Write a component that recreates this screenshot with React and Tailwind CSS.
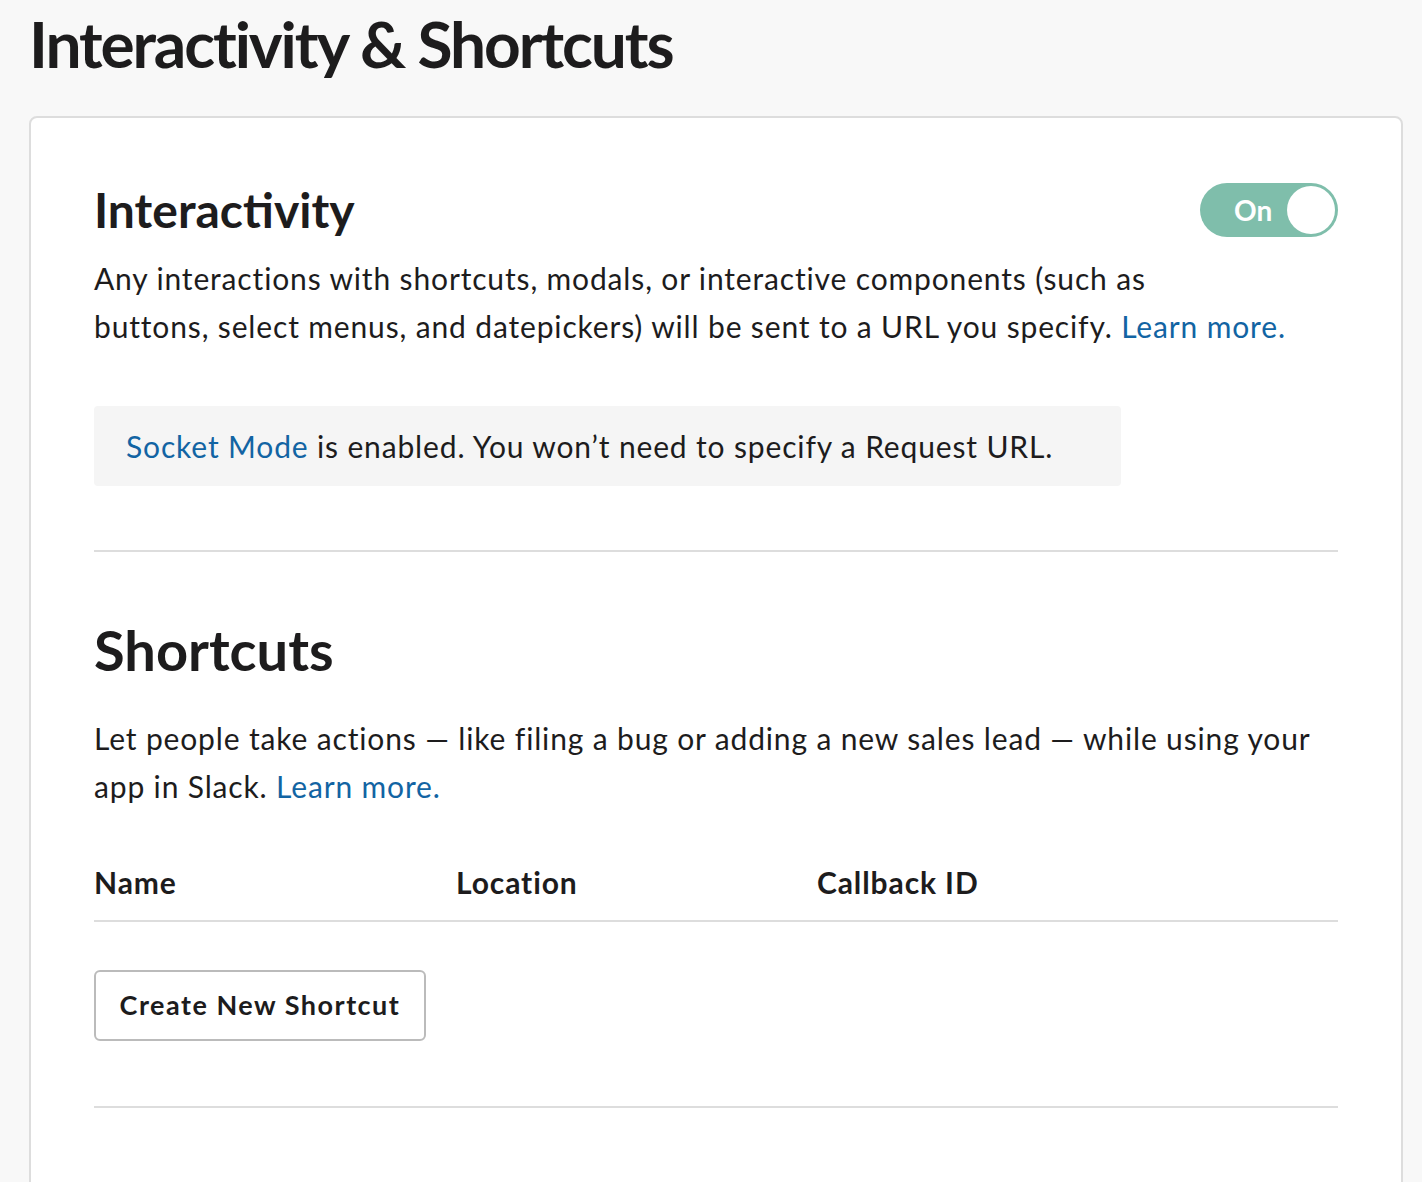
import React from 'react';

const Toggle = () => (
  <div className="relative flex h-[54px] w-[138px] items-center rounded-full bg-[#7fbeab]">
    <span className="ml-[34px] text-[28px] font-bold leading-none text-white">On</span>
    <span className="absolute right-[3px] top-[3px] h-[48px] w-[48px] rounded-full bg-white"></span>
  </div>
);

export default function App() {
  return (
    <div className="min-h-screen bg-[#f8f8f8] px-[29px] pt-[6px] text-[#1d1c1d]" style={{ fontFamily: 'Lato, "Noto Sans", sans-serif' }}>
      {/* Page title */}
      <h1 className="text-[64px] font-bold leading-[1.2] tracking-[-2.1px]">Interactivity &amp; Shortcuts</h1>

      <div className="mt-[33px] w-[1374px] rounded-lg border-2 border-[#dddddd] bg-white px-[63px] pb-[120px] pt-[63px]">
        {/* Interactivity */}
        <div className="flex items-center justify-between">
          <h2 className="text-[48px] font-bold leading-[1.2]">Interactivity</h2>
          <Toggle />
        </div>
        <p className="mt-[16px] whitespace-nowrap text-[30px] leading-[48px] tracking-[0.85px]">
          Any interactions with shortcuts, modals, or interactive components (such as
          <br />
          buttons, select menus, and datepickers) will be sent to a URL you specify.{' '}
          <a className="text-[#1264a3]">Learn more.</a>
        </p>

        <div className="mt-[56px] w-[1027px] whitespace-nowrap rounded bg-[#f5f5f5] px-[32px] py-[16px] text-[30px] leading-[48px] tracking-[0.85px]">
          <a className="text-[#1264a3]">Socket Mode</a> is enabled. You won’t need to specify a Request URL.
        </div>

        <div className="mt-[64px] h-[2px] bg-[#dddddd]"></div>

        {/* Shortcuts */}
        <h2 className="mt-[64px] text-[56px] font-bold leading-[1.2]">Shortcuts</h2>
        <p className="mt-[30px] whitespace-nowrap text-[30px] leading-[48px] tracking-[0.85px]">
          Let people take actions — like filing a bug or adding a new sales lead — while using your
          <br />
          app in Slack. <a className="text-[#1264a3]">Learn more.</a>
        </p>

        <div className="mt-[48px] flex border-b-2 border-[#dddddd] pb-[14px] text-[30px] font-bold leading-[48px] tracking-[0.9px]">
          <div className="w-[362px]">Name</div>
          <div className="w-[361px]">Location</div>
          <div>Callback ID</div>
        </div>

        <button className="mt-[48px] h-[71px] w-[332px] rounded-md border-2 border-[#bbbbbb] bg-white text-[27px] font-bold tracking-[1.5px]">
          Create New Shortcut
        </button>

        <div className="mt-[65px] h-[2px] bg-[#dddddd]"></div>
      </div>
    </div>
  );
}
